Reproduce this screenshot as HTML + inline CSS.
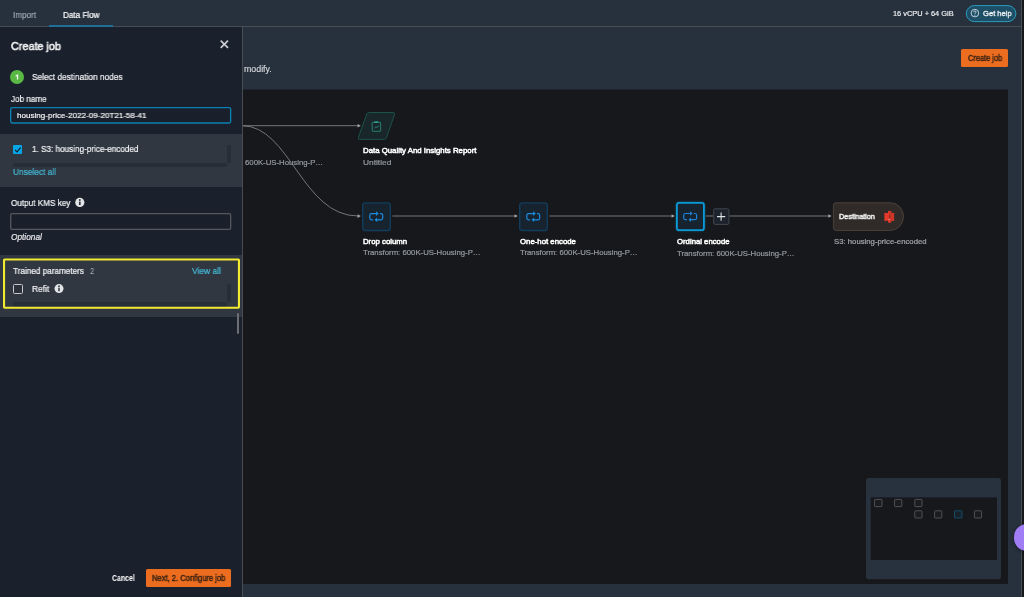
<!DOCTYPE html>
<html>
<head>
<meta charset="utf-8">
<title>Data Flow</title>
<style>
*{box-sizing:border-box;margin:0;padding:0}
html,body{width:1024px;height:597px;overflow:hidden;background:#27313e;font-family:"Liberation Sans",sans-serif;color:#fff}
.a{position:absolute}
.t{position:absolute;white-space:nowrap;line-height:1;will-change:transform;transform-origin:0 0}
</style>
</head>
<body>
<!-- top bar -->
<div class="a" style="left:0;top:0;width:1021px;height:26px;background:#27313e"></div>
<div class="a" style="left:0;top:26px;width:1021px;height:1px;background:#494c51"></div>
<div class="a" style="left:49px;top:25px;width:64px;height:2px;background:#1f6f96"></div>
<svg class="a" style="left:960px;top:0" width="61" height="26" viewBox="960 0 61 26"><rect x="966.3" y="5.6" width="49.6" height="16" rx="8" fill="#1d4e66" stroke="#2b9bbb" stroke-width="1"/></svg>
<svg class="a" style="left:970px;top:8px" width="10" height="10" viewBox="0 0 10 10"><circle cx="4.9" cy="5.1" r="3.8" fill="none" stroke="#e6f1f5" stroke-width="0.8"/><path d="M3.7 4.3 Q3.7 3 4.9 3 Q6.1 3 6.1 4.1 Q6.1 4.8 5.4 5.2 Q4.9 5.5 4.9 6.1" fill="none" stroke="#e6f1f5" stroke-width="0.8"/><circle cx="4.9" cy="7.3" r="0.5" fill="#e6f1f5"/></svg>
<!-- right strip -->
<div class="a" style="left:1021px;top:0;width:1px;height:597px;background:#4a4e54"></div>
<div class="a" style="left:1022px;top:0;width:2px;height:597px;background:#17181c"></div>

<!-- main: Create job button -->
<div class="a" style="left:961px;top:49px;width:47px;height:18px;background:#ec6d1f;border-radius:1.5px"></div>

<!-- canvas -->
<div class="a" style="left:243px;top:89px;width:765px;height:1px;background:#1f242c"></div>
<div class="a" style="left:243px;top:90px;width:765px;height:494px;background:#17181c"></div>
<svg class="a" style="left:243px;top:89px" width="765" height="495" viewBox="243 89 765 495">
  <g fill="none" stroke="#7d8084" stroke-width="0.9">
    <path d="M243 125.7 H358"/>
    <path d="M242 125.7 C290 125.7 302 216 358 216"/>
    <path d="M392.3 216 H515"/>
    <path d="M549.3 216 H672"/>
    <path d="M706 216 H713"/>
    <path d="M729.5 216 H829"/>
  </g>
  <g fill="#a6a9ac">
    <path d="M357.6 123.9 L360.8 125.7 L357.6 127.5Z"/>
    <path d="M357.6 214.3 L360.8 216.1 L357.6 217.9Z"/>
    <path d="M514.6 214.2 L517.8 216 L514.6 217.8Z"/>
    <path d="M671.6 214.2 L674.8 216 L671.6 217.8Z"/>
    <path d="M828.4 214.2 L831.6 216 L828.4 217.8Z"/>
  </g>
  <!-- report parallelogram -->
  <path d="M369.6 112.5 H393.2 Q395.3 112.5 394.6 114.5 L386.3 137.9 Q385.8 139.4 384.2 139.4 H359.8 Q357.7 139.4 358.4 137.4 L366.8 113.9 Q367.3 112.5 369.6 112.5Z" fill="#19272a" stroke="#1b524b" stroke-width="1"/>
  <g fill="none" stroke="#29897d" stroke-width="0.9">
    <rect x="372.2" y="122.3" width="8.4" height="9" rx="0.4"/>
    <path d="M374.2 128.2 L375.8 127 L377 127.4 L379 125.6"/>
  </g>
  <path d="M374.2 122.7 V121.6 H375.4 Q376.3 120.2 377.2 121.6 H378.4 V122.7Z" fill="#2fa596"/>
  <!-- transform nodes -->
  <rect x="362.7" y="202.9" width="27.6" height="27.6" rx="2.6" fill="#17232f" stroke="#113c5c" stroke-width="1.4"/>
  <rect x="519.7" y="202.9" width="27.6" height="27.6" rx="2.6" fill="#17232f" stroke="#113c5c" stroke-width="1.4"/>
  <rect x="676.4" y="202.4" width="28" height="28.2" rx="3" fill="none" stroke="#0a9fe0" stroke-opacity="0.16" stroke-width="3.2"/>
  <rect x="676.9" y="202.9" width="27" height="27.2" rx="2.2" fill="#17232f" stroke="#0b9ad8" stroke-width="1.8"/>
  <g transform="translate(369.2 211.1)"><g fill="none" stroke="#1b8de0" stroke-width="1.2" stroke-linecap="round" stroke-linejoin="round"><path d="M3.4 8.7 H2.4 Q0.6 8.7 0.6 6.9 V4.3 Q0.6 2.5 2.4 2.5 H7.6"/><path d="M11.2 2.5 H11.7 Q13.5 2.5 13.5 4.3 V6.9 Q13.5 8.7 11.7 8.7 H7"/></g><path d="M7 0.2 L9.5 2.5 L7 4.8Z M7.9 6.4 L5.4 8.7 L7.9 11Z" fill="#1b8de0"/></g>
  <g transform="translate(526.2 211.1)"><g fill="none" stroke="#1b8de0" stroke-width="1.2" stroke-linecap="round" stroke-linejoin="round"><path d="M3.4 8.7 H2.4 Q0.6 8.7 0.6 6.9 V4.3 Q0.6 2.5 2.4 2.5 H7.6"/><path d="M11.2 2.5 H11.7 Q13.5 2.5 13.5 4.3 V6.9 Q13.5 8.7 11.7 8.7 H7"/></g><path d="M7 0.2 L9.5 2.5 L7 4.8Z M7.9 6.4 L5.4 8.7 L7.9 11Z" fill="#1b8de0"/></g>
  <g transform="translate(683.1 211.0)"><g fill="none" stroke="#1b80d8" stroke-width="1.2" stroke-linecap="round" stroke-linejoin="round"><path d="M3.4 8.7 H2.4 Q0.6 8.7 0.6 6.9 V4.3 Q0.6 2.5 2.4 2.5 H7.6"/><path d="M11.2 2.5 H11.7 Q13.5 2.5 13.5 4.3 V6.9 Q13.5 8.7 11.7 8.7 H7"/></g><path d="M7 0.2 L9.5 2.5 L7 4.8Z M7.9 6.4 L5.4 8.7 L7.9 11Z" fill="#1b80d8"/></g>
  <!-- plus -->
  <rect x="713.7" y="208.8" width="15.2" height="15.6" rx="1.4" fill="#1c232d" stroke="#41464d" stroke-width="1"/>
  <path d="M717 216.6 H725.2 M721.1 212.6 V220.7" stroke="#e2e5e8" stroke-width="1.05" fill="none"/>
  <!-- destination -->
  <path d="M836 202.8 H890.4 A13.1 13.8 0 0 1 890.4 230.4 H836 Q833.4 230.4 833.4 227.8 V205.4 Q833.4 202.8 836 202.8Z" fill="#302b29" stroke="#4d4139" stroke-width="1"/>
  <g>
    <path d="M884.6 212.8 L888 213.6 V211.6 L889.7 210.8 L891.4 211.6 V213.6 L894.1 212.8 V221 L891.4 220.2 V222.1 L889.7 222.9 L888 222.1 V220.2 L884.6 221Z" fill="#dc392b"/>
    <path d="M884.6 212.8 L888 213.6 V220.2 L884.6 221Z" fill="#e43a2c"/>
    <path d="M888 211.6 L889.7 210.8 V222.9 L888 222.1Z" fill="#e13a2c"/>
    <path d="M889.7 210.8 L891.4 211.6 V222.1 L889.7 222.9Z" fill="#c53427"/>
    <path d="M889 214.8 H890.5 V218.2 H889Z" fill="#a52b1f"/>
    <path d="M891.4 213.6 L894.1 212.8 V221 L891.4 220.2Z" fill="#cf3628"/>
    <rect x="888.5" y="219.1" width="1.8" height="0.6" fill="#f0bdb6"/>
  </g>
  <!-- minimap -->
  <rect x="866" y="478" width="135" height="101.3" rx="3" fill="#28323f"/>
  <rect x="870.7" y="497.4" width="126.3" height="62.6" fill="#17181c"/>
  <g fill="#1b1c20" stroke="#5c5f63" stroke-width="0.8">
    <rect x="874.6" y="499.4" width="7.4" height="7.2" rx="0.7"/>
    <rect x="894.6" y="499.4" width="7.2" height="7.2" rx="0.7"/>
    <rect x="914.8" y="499.4" width="7.2" height="7.2" rx="0.7"/>
    <rect x="914.8" y="510.8" width="7.2" height="7.2" rx="0.7"/>
    <rect x="934.6" y="510.8" width="7.2" height="7.2" rx="0.7"/>
    <rect x="954.5" y="510.8" width="7.4" height="7.2" rx="0.7" stroke="#155a7a" fill="#17212a"/>
    <rect x="974.4" y="510.8" width="7.2" height="7.2" rx="0.7"/>
  </g>
</svg>

<!-- panel -->
<div class="a" style="left:0;top:27px;width:242px;height:570px;background:#1b212c"></div>
<div class="a" style="left:242px;top:27px;width:1px;height:570px;background:#494c51"></div>
<svg class="a" style="left:218px;top:38px" width="13" height="13" viewBox="218 38 13 13"><path d="M220.7 40.6 L228 47.9 M228 40.6 L220.7 47.9" stroke="#cbced2" stroke-width="1.6" fill="none"/></svg>
<div class="a" style="left:9.9px;top:69.9px;width:14.2px;height:14.2px;border-radius:50%;background:#5ab945"></div>
<svg class="a" style="left:0;top:100px" width="242" height="30" viewBox="0 100 242 30"><rect x="10.68" y="107.68" width="219.95" height="15.3" rx="1.4" fill="#1a202b" stroke="#0c80b2" stroke-width="1.35"/></svg>
<!-- block 1 -->
<div class="a" style="left:0;top:134px;width:242px;height:53px;background:#303740"></div>
<div class="a" style="left:13px;top:145px;width:9.4px;height:9.4px;background:#05a5e6;border-radius:1px"></div>
<svg class="a" style="left:13px;top:145px" width="10" height="10" viewBox="0 0 10 10"><path d="M2.1 5 L4 6.9 L7.6 2.6" stroke="#14202c" stroke-width="1.1" fill="none"/></svg>
<div class="a" style="left:227px;top:145px;width:4.3px;height:18px;background:#262e39"></div>
<div class="a" style="left:13px;top:163px;width:214px;height:4px;background:#262e39"></div>
<!-- KMS -->
<svg class="a" style="left:74px;top:197px" width="12" height="12" viewBox="0 0 12 12"><circle cx="5.8" cy="5.4" r="4.6" fill="#e2e4e6"/><rect x="5" y="4.6" width="1.6" height="3.4" fill="#2a313b"/><circle cx="5.8" cy="3" r="0.95" fill="#2a313b"/></svg>
<svg class="a" style="left:0;top:206px" width="242" height="30" viewBox="0 206 242 30"><rect x="10.7" y="213.65" width="219.95" height="15.75" rx="1.4" fill="#1a202b" stroke="#54585e" stroke-width="1.3"/></svg>
<!-- block 2 -->
<div class="a" style="left:0;top:255px;width:242px;height:62px;background:#303740"></div>
<div class="a" style="left:227px;top:284px;width:4.3px;height:18px;background:#262e39"></div>
<div class="a" style="left:13px;top:302px;width:214px;height:4.5px;background:#262e39"></div>
<svg class="a" style="left:0;top:255px" width="242" height="62" viewBox="0 255 242 62"><rect x="4.05" y="259.45" width="234.9" height="48.25" rx="0.6" fill="none" stroke="#f1ea30" stroke-width="2.1"/></svg>
<div class="a" style="left:13px;top:284px;width:9.5px;height:10px;border:1px solid #c5c9cd;border-radius:1.5px;background:#2b323b"></div>
<svg class="a" style="left:53px;top:283px" width="12" height="12" viewBox="0 0 12 12"><circle cx="6" cy="5.6" r="4.5" fill="#e2e4e6"/><rect x="5.2" y="4.8" width="1.6" height="3.4" fill="#3a414b"/><circle cx="6" cy="3.2" r="0.95" fill="#3a414b"/></svg>
<div class="a" style="left:237px;top:313px;width:2px;height:21px;background:#6b6e72;border-radius:1px"></div>
<!-- footer -->
<div class="a" style="left:146px;top:569px;width:85px;height:18px;background:#ec6d1f;border-radius:1.5px"></div>

<!-- help bubble -->
<div class="a" style="left:1013.8px;top:524.4px;width:26.2px;height:26.2px;border-radius:50%;background:#a07df5;box-shadow:0 1px 4px rgba(0,0,0,.45)"></div>
<div class="a" style="left:1022px;top:0;width:2px;height:524px;background:#17181c"></div>

<div class="t" style="left:12.90px;top:11.15px;font-size:8.7px;color:#a4adb5;transform:scaleX(0.9328);-webkit-text-stroke:0.15px #a4adb5;">Import</div>
<div class="t" style="left:62.70px;top:11.15px;font-size:8.7px;color:#ffffff;transform:scaleX(0.9345);-webkit-text-stroke:0.2px #ffffff;">Data Flow</div>
<div class="t" style="left:893.20px;top:10.30px;font-size:7.4px;color:#f4f5f6;-webkit-text-stroke:0.15px #f4f5f6;">16 vCPU + 64 GiB</div>
<div class="t" style="left:982.60px;top:10.20px;font-size:7.6px;color:#f1f5f7;transform:scaleX(0.9955);-webkit-text-stroke:0.28px #f1f5f7;">Get help</div>
<div class="t" style="left:244.00px;top:65.15px;font-size:8.7px;color:#d6d9dc;transform:scaleX(1.0147);-webkit-text-stroke:0.15px #d6d9dc;">modify.</div>
<div class="t" style="left:967.50px;top:54.90px;font-size:8.2px;color:#3f2413;transform:scaleX(0.9039);-webkit-text-stroke:0.45px #3f2413;">Create job</div>
<div class="t" style="left:10.60px;top:40.20px;font-size:11.6px;color:#f2f3f3;transform:scaleX(0.9342);-webkit-text-stroke:0.55px #f2f3f3;">Create job</div>
<div class="t" style="left:31.70px;top:73.00px;font-size:9px;color:#f1f3f5;transform:scaleX(0.9238);-webkit-text-stroke:0.22px #f1f3f5;">Select destination nodes</div>
<div class="t" style="left:10.80px;top:95.00px;font-size:9px;color:#f1f3f5;transform:scaleX(0.9007);-webkit-text-stroke:0.22px #f1f3f5;">Job name</div>
<div class="t" style="left:16.80px;top:111.95px;font-size:8.1px;color:#ffffff;transform:scaleX(0.9959);-webkit-text-stroke:0.15px #ffffff;">housing-price-2022-09-20T21-58-41</div>
<div class="t" style="left:32.00px;top:145.00px;font-size:9px;color:#f1f3f5;transform:scaleX(0.9058);-webkit-text-stroke:0.22px #f1f3f5;">1. S3: housing-price-encoded</div>
<div class="t" style="left:12.80px;top:168.00px;font-size:9px;color:#44b9d6;transform:scaleX(0.9243);-webkit-text-stroke:0.22px #44b9d6;">Unselect all</div>
<div class="t" style="left:11.00px;top:199.00px;font-size:9px;color:#f1f3f5;transform:scaleX(0.9065);-webkit-text-stroke:0.22px #f1f3f5;">Output KMS key</div>
<div class="t" style="left:10.60px;top:233.35px;font-size:8.3px;color:#e4e6e8;font-style:italic;-webkit-text-stroke:0.2px #e4e6e8;">Optional</div>
<div class="t" style="left:13.30px;top:267.00px;font-size:9px;color:#f1f3f5;transform:scaleX(0.9053);-webkit-text-stroke:0.22px #f1f3f5;">Trained parameters</div>
<div class="t" style="left:90.00px;top:267.00px;font-size:9px;color:#aab2ba;transform:scaleX(0.8391);">2</div>
<div class="t" style="left:191.90px;top:267.00px;font-size:9px;color:#44b9d6;transform:scaleX(0.9400);-webkit-text-stroke:0.22px #44b9d6;">View all</div>
<div class="t" style="left:31.80px;top:285.00px;font-size:9px;color:#f1f3f5;transform:scaleX(0.9295);-webkit-text-stroke:0.22px #f1f3f5;">Refit</div>
<div class="t" style="left:112.00px;top:574.30px;font-size:8.4px;color:#ffffff;font-weight:bold;transform:scaleX(0.8277);">Cancel</div>
<div class="t" style="left:151.60px;top:574.30px;font-size:8.4px;color:#3f2413;transform:scaleX(0.9059);-webkit-text-stroke:0.45px #3f2413;">Next, 2. Configure job</div>
<div class="t" style="left:245.30px;top:159.15px;font-size:7.7px;color:#959a9f;transform:scaleX(1.0095);-webkit-text-stroke:0.2px #959a9f;">600K-US-Housing-P…</div>
<div class="t" style="left:362.90px;top:147.15px;font-size:7.7px;color:#ffffff;transform:scaleX(1.0169);-webkit-text-stroke:0.5px #ffffff;">Data Quality And Insights Report</div>
<div class="t" style="left:362.60px;top:159.15px;font-size:7.7px;color:#959a9f;transform:scaleX(1.0878);-webkit-text-stroke:0.2px #959a9f;">Untitled</div>
<div class="t" style="left:362.90px;top:238.15px;font-size:7.7px;color:#ffffff;transform:scaleX(1.0125);-webkit-text-stroke:0.5px #ffffff;">Drop column</div>
<div class="t" style="left:362.60px;top:249.15px;font-size:7.7px;color:#959a9f;transform:scaleX(1.0108);-webkit-text-stroke:0.2px #959a9f;">Transform: 600K-US-Housing-P…</div>
<div class="t" style="left:519.90px;top:238.15px;font-size:7.7px;color:#ffffff;transform:scaleX(1.0140);-webkit-text-stroke:0.5px #ffffff;">One-hot encode</div>
<div class="t" style="left:519.60px;top:249.15px;font-size:7.7px;color:#959a9f;transform:scaleX(1.0108);-webkit-text-stroke:0.2px #959a9f;">Transform: 600K-US-Housing-P…</div>
<div class="t" style="left:676.90px;top:238.15px;font-size:7.7px;color:#ffffff;transform:scaleX(1.0072);-webkit-text-stroke:0.5px #ffffff;">Ordinal encode</div>
<div class="t" style="left:676.60px;top:250.15px;font-size:7.7px;color:#959a9f;transform:scaleX(1.0108);-webkit-text-stroke:0.2px #959a9f;">Transform: 600K-US-Housing-P…</div>
<div class="t" style="left:838.90px;top:213.30px;font-size:7.4px;color:#f2f2f2;transform:scaleX(0.9724);-webkit-text-stroke:0.45px #f2f2f2;">Destination</div>
<div class="t" style="left:833.50px;top:238.15px;font-size:7.7px;color:#a3a7ac;transform:scaleX(1.0072);-webkit-text-stroke:0.2px #a3a7ac;">S3: housing-price-encoded</div>
<svg class="a" style="left:9px;top:69px" width="16" height="16" viewBox="9 69 16 16"><path d="M15.4 75.7 L17.1 74.4 H18.2 V79.4 H16.9 V75.9 L15.9 76.7Z" fill="#f6fbf5"/></svg>
</body>
</html>
